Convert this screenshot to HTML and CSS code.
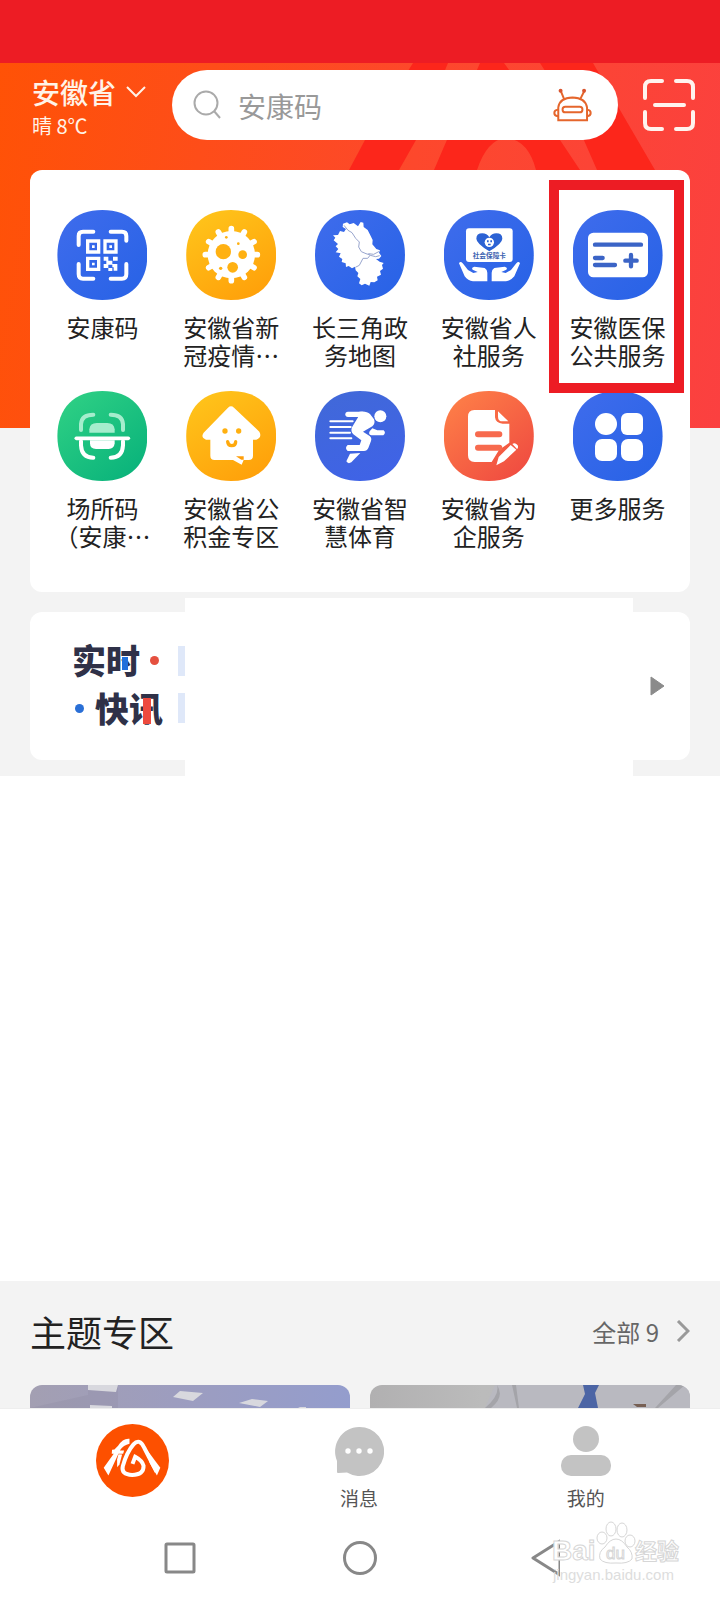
FILE: index.html
```html
<!DOCTYPE html>
<html lang="zh-CN">
<head>
<meta charset="utf-8">
<meta name="viewport" content="width=device-width, initial-scale=1">
<title>安徽省</title>
<link rel="stylesheet" href="styles.css">
</head>
<body>
<div class="page">
  <div class="status-bar"></div>

  <main class="home">
    <svg class="home-art" viewBox="0 0 720 365" aria-hidden="true">
      <path d="M413 0H448L416 77L399 107H349L365 77Z"/>
      <path d="M480 0H504L560 77L580 107H536Q528 76 505 75Q487 77 477 107H434Z"/>
      <path d="M540 0H593L620 47L655 107H597L572 50Z"/>
    </svg>

    <header class="topbar">
      <div class="place">
        <button class="place-name" type="button">安徽省
          <svg class="chevron-down" viewBox="0 0 20 12" aria-hidden="true"><path d="M1 1L10 10L19 1"/></svg>
        </button>
        <span class="weather">晴 8℃</span>
      </div>
      <form class="search" role="search">
        <svg class="search-glass" viewBox="0 0 30 30" aria-hidden="true"><circle cx="14" cy="13" r="11.5"/><path d="M22 21L28 28"/></svg>
        <input class="search-input" type="search" placeholder="安康码" aria-label="搜索">
        <button class="robot" type="button" aria-label="智能客服">
          <svg viewBox="580 142 118 102" aria-hidden="true">
            <path d="M596 239V200Q600 171 639 170Q678 171 683 200V239Z"/>
            <rect x="609" y="198" width="60" height="17" rx="8"/>
            <path d="M595 207Q584 208 584 217Q584 226 595 227M683 207Q694 208 694 217Q694 226 683 227M604 152L614 176M674 152L662 176"/>
            <circle class="robot-tip" cx="603" cy="150" r="6"/><circle class="robot-tip" cx="674" cy="150" r="6"/>
          </svg>
        </button>
      </form>
      <button class="scan" type="button" aria-label="扫一扫">
        <svg viewBox="0 0 54 54" aria-hidden="true"><path d="M3 20V9Q3 3 9 3H20M34 3H45Q51 3 51 9V20M51 34V45Q51 51 45 51H34M20 51H9Q3 51 3 45V34M13 27H42"/></svg>
      </button>
    </header>

    <nav class="services card" aria-label="服务">
      <a class="service" href="#">
        <span class="icon blue"><svg viewBox="81 60 270 270" aria-hidden="true">
          <path class="line" stroke-width="12" d="M146 165V138Q146 125 159 125H190M242 125H276Q289 125 289 138V152M289 222V252Q289 266 276 266H242M190 266H159Q146 266 146 252V222"/>
          <path class="fill" fill-rule="evenodd" d="M168 148h43v43h-43zM178 158v23h23v-23zM220 148h43v43h-43zM230 158v23h23v-23zM168 200h43v43h-43zM178 210v23h23v-23zM186 166h8v8h-8zM238 166h8v8h-8zM186 218h8v8h-8z"/>
          <path class="fill" d="M221 200h14v12h12v12h-12v10h-14v-12h8v-10h-8zM249 200h14v12h-14zM247 222h15v20h-11v-10h-4zM235 234h12v9h-12z"/>
        </svg></span>
        <span class="label">安康码</span>
      </a>
      <a class="service" href="#">
        <span class="icon yellow"><svg viewBox="468 60 270 270" aria-hidden="true">
          <circle class="fill" cx="604" cy="194" r="71"/>
          <g class="line" stroke-width="17">
            <path d="M604 116V272M526 194H682M565 126L643 262M643 126L565 262M536 155L672 233M672 155L536 233"/>
          </g>
          <g fill="#ffb112">
            <circle cx="580" cy="185" r="23"/><circle cx="638" cy="194" r="13"/><circle cx="608" cy="232" r="16"/><circle cx="625" cy="161" r="4"/><circle cx="589" cy="142" r="4"/><circle cx="572" cy="235" r="5"/>
          </g>
        </svg></span>
        <span class="label">安徽省新冠疫情…</span>
      </a>
      <a class="service" href="#">
        <span class="icon blue"><svg viewBox="76 60 270 270" aria-hidden="true">
          <path class="fill" d="M160 101L172 97L180 103L192 99L205 109L213 96L221 98L222 111L234 120L242 136L249 150L248 163L260 177L271 181L268 188L275 198L268 206L259 207L270 215L282 219L277 225L280 236L271 243L274 254L262 260L264 271L254 277L243 276L239 287L226 281L216 286L208 280L212 267L203 259L206 249L198 241L196 230L187 235L177 228L169 231L168 220L156 216L158 207L148 200L153 190L138 187L146 177L138 169L145 162L132 151L137 143L130 136L145 135L151 123L163 126L169 117L159 111Z"/>
          <path d="M163 106L175 121L187 128L198 145L209 156L207 171L215 185L229 191L242 195L234 205L220 205L209 226L197 232M236 191L252 193L269 184M242 196L258 200L270 197" fill="none" stroke="#98a5cd" stroke-width="3"/>
        </svg></span>
        <span class="label">长三角政务地图</span>
      </a>
      <a class="service" href="#">
        <span class="icon blue"><svg viewBox="462 60 270 270" aria-hidden="true">
          <rect class="fill" x="528" y="115" width="140" height="101" rx="9"/>
          <path d="M598 184Q559 160 559 146Q559 130 577 130Q591 130 598 142Q605 130 619 130Q637 130 637 146Q637 160 598 184Z" fill="#2c62d4"/>
          <circle class="fill" cx="598" cy="157" r="14"/>
          <path d="M591 151h5v6h-5zM601 151h5v6h-5zM594 161h8v5h-8z" fill="#2c62d4"/>
          <text class="card-text" x="598" y="205">社会保障卡</text>
          <path class="fill" d="M507 220Q511 212 518 220L534 240L550 249L563 246L548 239Q543 232 553 230L584 234Q592 239 592 248V274H549Q534 272 524 259ZM690 220Q686 212 679 220L663 240L647 249L634 246L649 239Q654 232 644 230L613 234Q605 239 605 248V274H648Q663 272 673 259Z"/>
        </svg></span>
        <span class="label">安徽省人社服务</span>
      </a>
      <a class="service highlighted" href="#">
        <span class="icon blue"><svg viewBox="126 120 270 270" aria-hidden="true">
          <rect class="fill" x="171" y="188" width="180" height="134" rx="16"/>
          <path d="M192 224H330M192 264H215M192 285H252M283 272H317M300 255V289" fill="none" stroke="#3b64c6" stroke-width="13" stroke-linecap="round"/>
        </svg></span>
        <span class="label">安徽医保公共服务</span>
      </a>
      <a class="service" href="#">
        <span class="icon green"><svg viewBox="81 33 270 270" aria-hidden="true">
          <path d="M153 150V132Q155 104 190 104M242 104Q277 104 279 132V150" fill="none" stroke="#a5edcd" stroke-width="12" stroke-linecap="round"/>
          <path d="M178 158V148Q180 129 200 129H232Q252 129 254 148V158Z" fill="#a5edcd"/>
          <path class="line" stroke-width="12" d="M153 184V196Q155 233 190 233M242 233Q277 233 279 196V184"/>
          <path class="fill" d="M180 181H254V190Q252 207 236 207H198Q180 207 180 190Z"/>
          <path class="line" stroke-width="11" d="M139 175H295"/>
        </svg></span>
        <span class="label">场所码（安康…</span>
      </a>
      <a class="service" href="#">
        <span class="icon yellow"><svg viewBox="468 33 270 270" aria-hidden="true">
          <path class="fill" d="M594 83Q603 75 612 83L688 155Q697 172 679 179H669V227Q669 240 656 240H641L635 254L609 240H554Q541 240 541 227V179H528Q511 172 521 158Z"/>
          <circle cx="585" cy="153" r="8" fill="#ffb010"/><circle cx="626" cy="153" r="8" fill="#ffb010"/>
          <path d="M593 185Q594 197 605 197Q617 197 617 185" fill="none" stroke="#ffa90c" stroke-width="10" stroke-linecap="round"/>
          <path d="M618 229H641V239H634Z" fill="#ff9e08"/>
        </svg></span>
        <span class="label">安徽省公积金专区</span>
      </a>
      <a class="service" href="#">
        <span class="icon indigo"><svg viewBox="75 33 270 270" aria-hidden="true">
          <circle class="fill" cx="271" cy="109" r="18"/>
          <path class="line" stroke-width="6" d="M121 124H188M121 141H182M121 158H180M121 175H184"/>
          <path class="line" stroke-width="16" d="M174 103H216"/>
          <path class="fill" d="M208 95Q230 92 240 102L252 118Q257 130 247 139L219 155L239 168Q246 174 243 183L235 204Q231 213 222 213H173Q163 204 173 195H209L214 181L190 163Q181 154 186 142L206 109ZM180 221L211 219L184 247Q174 253 169 244ZM247 145L262 151H281Q289 159 280 166H244Q234 164 239 154Z"/>
        </svg></span>
        <span class="label">安徽省智慧体育</span>
      </a>
      <a class="service" href="#">
        <span class="icon orange"><svg viewBox="462 33 270 270" aria-hidden="true">
          <path class="fill" d="M553 90H615V112Q617 130 638 131H658V188L627 210L605 246H554Q534 246 534 226V110Q534 90 553 90Z"/>
          <path class="fill" d="M624 94L655 124H638Q624 124 624 110ZM662 195L679 209L642 244L619 256L626 231ZM667 192Q675 186 683 196Q686 203 681 207Z"/>
          <path d="M564 163H628M564 203H628" fill="none" stroke="#f76a4e" stroke-width="18" stroke-linecap="round"/>
        </svg></span>
        <span class="label">安徽省为企服务</span>
      </a>
      <a class="service" href="#">
        <span class="icon blue"><svg viewBox="0 0 90 90" aria-hidden="true">
          <circle class="fill" cx="33" cy="33" r="11"/><rect class="fill" x="48" y="22" width="22" height="22" rx="6"/><rect class="fill" x="22" y="48" width="22" height="22" rx="7"/><rect class="fill" x="48" y="48" width="22" height="22" rx="7"/>
        </svg></span>
        <span class="label">更多服务</span>
      </a>
    </nav>

    <section class="news card" aria-label="实时快讯">
      <h2 class="news-title">
        <span class="news-line"><span class="glyph">实</span><span class="glyph accent-blue">时</span><i class="dot red"></i></span>
        <span class="news-line"><i class="dot azure"></i><span class="glyph">快</span><span class="glyph accent-red">讯</span></span>
      </h2>
      <div class="tags"><span class="tag"></span><span class="tag"></span></div>
      <svg class="play" viewBox="0 0 15 20" aria-hidden="true"><path d="M1 1L14 10L1 19Z"/></svg>
      <div class="news-cover"></div>
    </section>
  </main>

  <div class="blank"></div>

  <section class="topics">
    <div class="topics-head">
      <h2 class="topics-title">主题专区</h2>
      <a class="topics-all" href="#">全部 9
        <svg class="chevron-right" viewBox="0 0 14 22" aria-hidden="true"><path d="M2 1L12 11L2 21"/></svg>
      </a>
    </div>
    <div class="thumbs">
      <a class="thumb office" href="#" aria-label="专区一">
        <svg viewBox="0 0 320 23" preserveAspectRatio="none" aria-hidden="true">
          <path fill="#8d89a0" opacity=".25" d="M58 0H88V23H0L58 10Z"/>
          <path fill="#d8d8de" d="M58 0H88L86 7L58 5ZM60 20L82 21V23H60ZM150 6L173 8L163 16L143 12ZM222 14L238 16L230 22L209 18ZM270 22H276V23H268Z"/>
        </svg>
      </a>
      <a class="thumb doctor" href="#" aria-label="专区二">
        <svg viewBox="0 0 320 23" preserveAspectRatio="none" aria-hidden="true">
          <path fill="#b9b9c0" d="M125 0H320V23H115Z"/>
          <path fill="#a4a4a9" d="M127 0Q130 10 115 23H121Q135 12 127 0ZM142 0H146L149 23H147ZM306 0L285 23H288L315 0Z"/>
          <path fill="#4c65a5" d="M213 0H229L225 8L228 23H208L215 9Z"/>
          <path fill="#776054" d="M263 19h13v3h-9z"/>
        </svg>
      </a>
    </div>
  </section>

  <nav class="tabs" aria-label="主导航">
    <a class="tab" href="#" aria-label="首页">
      <svg class="tab-logo" viewBox="110 59 218 218" aria-hidden="true">
        <circle cx="219" cy="168" r="109" fill="#fd5000"/>
        <path class="fill" d="M210 103Q190 101 176 124L165 135L158 136L157 148H163L133 190L147 213L177 148H191L194 138H181Q192 122 210 118Z"/>
        <path class="fill" d="M177 149L188 150L180 180L173 188V165Z"/>
        <path d="M291 202L254 130Q240 100 222 120Q202 143 190 185Q184 210 218 211Q253 211 252 184Q248 168 227 157L219 178" fill="none" stroke="#fff" stroke-width="12"/>
        <path class="fill" d="M262 136L302 190L292 213L270 175Z"/>
      </svg>
    </a>
    <a class="tab" href="#">
      <svg class="tab-icon" viewBox="0 0 50 50" aria-hidden="true"><path fill="#c3c3c3" d="M25 1A24.500 24.500 0 1 1 13 46.500L4 47Q3 47 3 46V35A24.500 24.500 0 0 1 25 1Z"/><circle class="fill" cx="14" cy="25" r="2.700"/><circle class="fill" cx="25" cy="25" r="2.700"/><circle class="fill" cx="36" cy="25" r="2.700"/></svg>
      <span>消息</span>
    </a>
    <a class="tab" href="#">
      <svg class="tab-icon" viewBox="0 0 50 50" aria-hidden="true"><circle cx="25" cy="13" r="13" fill="#c3c3c3"/><rect x="0" y="29" width="50" height="21" rx="10" fill="#c3c3c3"/></svg>
      <span>我的</span>
    </a>
  </nav>

  <div class="system-nav">
    <button class="key" type="button" aria-label="最近任务"><svg viewBox="0 0 40 40" aria-hidden="true"><rect x="6" y="6" width="28" height="28" rx="1"/></svg></button>
    <button class="key" type="button" aria-label="主屏幕"><svg viewBox="0 0 40 40" aria-hidden="true"><circle cx="20" cy="20" r="15.500"/></svg></button>
    <button class="key" type="button" aria-label="返回"><svg viewBox="0 0 40 40" aria-hidden="true"><path d="M40 3L13 20L40 37Z"/></svg></button>
    <div class="watermark">
      <svg viewBox="0 0 130 66" role="img" aria-label="Baidu 经验">
        <g class="paw"><ellipse cx="59" cy="9" rx="5" ry="7"/><ellipse cx="70" cy="10" rx="5" ry="7"/><ellipse cx="50" cy="18" rx="5" ry="6"/><ellipse cx="78" cy="21" rx="5" ry="6"/><path d="M64 19Q58 19 53 27Q46 32 48 39Q52 44 64 43Q76 44 80 39Q81 32 75 27Q70 19 64 19Z"/></g>
        <text class="mark-big" x="0" y="40">Bai</text>
        <text class="mark-du" x="54" y="39">du</text>
        <text class="mark-cjk" x="83" y="39">经验</text>
        <text class="mark-url" x="1" y="60">jingyan.baidu.com</text>
      </svg>
    </div>
  </div>
</div>
</body>
</html>
```

FILE: styles.css
```css
* {
  box-sizing: border-box;
}

body {
  margin: 0;
  background: #fff;
  color: #222;
  font-family: "Noto Sans CJK SC", "Noto Sans", sans-serif;
}

a {
  color: inherit;
  text-decoration: none;
}

button {
  padding: 0;
  border: 0;
  background: none;
  color: inherit;
  font: inherit;
}

h2 {
  margin: 0;
}

svg {
  display: block;
}

.page {
  display: flex;
  flex-direction: column;
  min-height: 100vh;
}

.status-bar {
  height: 63px;
  background: #ed1c24;
}

.home {
  position: relative;
  display: flex;
  flex-direction: column;
  padding: 0 30px 16px;
  background: linear-gradient(100deg, #ff5206, #fd482c 55%, #fb4040) top / 100% 365px no-repeat #f3f3f3;
}

.home-art {
  position: absolute;
  top: 0;
  left: 0;
  width: 100%;
  fill: #fc261b;
}

/* top bar */

.topbar {
  position: relative;
  display: flex;
  align-items: center;
  height: 107px;
  padding: 0 0 24px 2px;
}

.place {
  width: 140px;
  padding-top: 6px;
  color: #fff3e8;
}

.place-name {
  display: flex;
  align-items: center;
  gap: 10px;
  font-size: 28px;
  font-weight: 500;
  line-height: 36px;
}

.chevron-down {
  width: 20px;
  height: 12px;
  fill: none;
  stroke: #fff3e8;
  stroke-width: 2;
}

.weather {
  display: block;
  font-size: 20px;
  line-height: 32px;
}

.search {
  display: flex;
  flex: 1;
  align-items: center;
  height: 70px;
  min-width: 0;
  padding: 0 26px 0 20px;
  border-radius: 35px;
  background: #fff;
}

.search-glass {
  width: 30px;
  height: 30px;
  fill: none;
  stroke: #aaa;
  stroke-width: 2;
}

.search-input {
  flex: 1;
  min-width: 0;
  padding: 2px 16px 0;
  border: 0;
  outline: 0;
  background: none;
  color: #333;
  font: inherit;
  font-size: 28px;
}

.search-input::placeholder {
  color: #999;
  opacity: 1;
}

.robot svg {
  width: 39px;
  height: 34px;
  fill: none;
  stroke: #e5662c;
  stroke-width: 6;
}

.robot .robot-tip {
  fill: #d9552f;
  stroke: none;
}

.scan {
  margin-left: 24px;
  margin-right: -6px;
}

.scan svg {
  width: 54px;
  height: 54px;
  fill: none;
  stroke: #fff3ee;
  stroke-width: 4;
  stroke-linecap: round;
}

/* services */

.card {
  position: relative;
  border-radius: 12px;
  background: #fff;
}

.services {
  display: grid;
  grid-template-columns: repeat(5, 1fr);
  row-gap: 22px;
  padding: 40px 8px 42px;
}

.service {
  position: relative;
  display: flex;
  flex-direction: column;
  align-items: center;
  gap: 13px;
}

.highlighted::after {
  content: "";
  position: absolute;
  z-index: 1;
  inset: -30px -2px -24px -4px;
  border: 10px solid #ed1c24;
}

.icon {
  width: 90px;
  height: 90px;
  clip-path: path("M45 0C73 0 90 17 90 45C90 73 73 90 45 90C17 90 0 73 0 45C0 17 17 0 45 0Z");
}

.icon svg {
  width: 100%;
  height: 100%;
}

.blue {
  background: linear-gradient(135deg, #3f6cec, #2762e6);
}

.indigo {
  background: linear-gradient(160deg, #4169d8, #3f62e8);
}

.yellow {
  background: linear-gradient(150deg, #ffc71c, #ff9c08);
}

.green {
  background: linear-gradient(140deg, #31d285, #06b07a);
}

.orange {
  background: linear-gradient(140deg, #ff8348, #ee4640);
}

.fill {
  fill: #fff;
}

.line {
  fill: none;
  stroke: #fff;
  stroke-linecap: round;
}

.card-text {
  fill: #3c62b0;
  font-size: 20px;
  font-weight: 700;
  text-anchor: middle;
}

.label {
  width: 96px;
  min-height: 56px;
  font-size: 24px;
  line-height: 28px;
  text-align: center;
}

/* news */

.news {
  display: flex;
  align-items: center;
  height: 148px;
  margin-top: 20px;
  padding: 0 25px 4px 42px;
}

.news-title {
  width: 106px;
  color: #2f3148;
  font-size: 34px;
  font-weight: 900;
  line-height: 48px;
}

.news-line {
  display: flex;
  align-items: center;
}

.glyph {
  position: relative;
}

.accent-blue::after,
.accent-red::after {
  content: "";
  position: absolute;
  top: 21px;
  left: 16px;
  width: 6px;
  height: 13px;
  background: #1f70dc;
}

.accent-red::after {
  top: 14px;
  left: 14px;
  width: 8px;
  height: 26px;
  background: #ee4a3e;
}

.dot {
  width: 9px;
  height: 9px;
  border-radius: 50%;
}

.red {
  margin-left: 10px;
  background: #e5503f;
}

.azure {
  margin: 0 11px 0 3px;
  background: #2a6fd6;
}

.tags {
  display: grid;
  gap: 17px;
}

.tag {
  width: 20px;
  height: 30px;
  background: #dfe8f9;
}

.play {
  width: 15px;
  height: 22px;
  margin-top: 4px;
  margin-left: auto;
  fill: #8b8b8b;
  stroke: #8b8b8b;
  stroke-width: 1;
  stroke-linejoin: round;
}

.news-cover {
  position: absolute;
  inset: -14px 57px -16px 155px;
  background: #fff;
}

.blank {
  flex: 1;
}

/* topics */

.topics {
  padding: 0 30px;
  background: #f3f3f3;
}

.topics-head {
  display: flex;
  align-items: center;
  justify-content: space-between;
  height: 104px;
  padding-bottom: 4px;
}

.topics-title {
  font-size: 36px;
  font-weight: 400;
  line-height: 48px;
}

.topics-all {
  display: flex;
  align-items: center;
  gap: 17px;
  color: #666;
  font-size: 24px;
}

.chevron-right {
  width: 14px;
  height: 22px;
  fill: none;
  stroke: #999;
  stroke-width: 3;
}

.thumbs {
  display: grid;
  grid-template-columns: 1fr 1fr;
  gap: 20px;
}

.thumb {
  overflow: hidden;
  height: 23px;
  border-radius: 12px 12px 0 0;
}

.thumb svg {
  width: 100%;
  height: 100%;
}

.office {
  background: linear-gradient(90deg, #a39fb2, #9d9dbf 45%, #949dcd);
}

.doctor {
  background: linear-gradient(90deg, #b1b0b1, #bbb 35%, #b5b5bb);
}

/* bottom navigation */

.tabs {
  display: grid;
  grid-template-columns: repeat(3, 1fr);
  padding: 15px 21px 10px 19px;
  border-top: 1px solid #eee;
}

.tab {
  display: flex;
  flex-direction: column;
  align-items: center;
  gap: 8px;
  color: #555;
  font-size: 19px;
  line-height: 28px;
}

.tab-logo {
  width: 73px;
  height: 73px;
}

.tab-icon {
  width: 50px;
  height: 50px;
  margin-top: 2px;
}

.system-nav {
  position: relative;
  display: grid;
  grid-template-columns: repeat(3, 1fr);
  padding: 10px 90px 16px;
}

.key {
  display: flex;
  justify-content: center;
  padding: 6px 0;
}

.key svg {
  width: 40px;
  height: 40px;
  fill: none;
  stroke: #888;
  stroke-width: 3;
  stroke-linejoin: round;
}

.watermark {
  position: absolute;
  right: 38px;
  bottom: 14px;
  width: 130px;
}

.watermark text,
.paw {
  fill: #fff;
  stroke: #d6d6d6;
  stroke-width: 1;
}

.watermark text {
  font-family: "Liberation Sans", "Noto Sans CJK SC", sans-serif;
}

.watermark .mark-big {
  font-size: 28px;
  font-weight: 700;
}

.watermark .mark-du {
  font-size: 17px;
}

.watermark .mark-cjk {
  font-size: 22px;
  font-weight: 700;
}

.watermark .mark-url {
  fill: #ddd;
  stroke: none;
  font-size: 15px;
}
```
